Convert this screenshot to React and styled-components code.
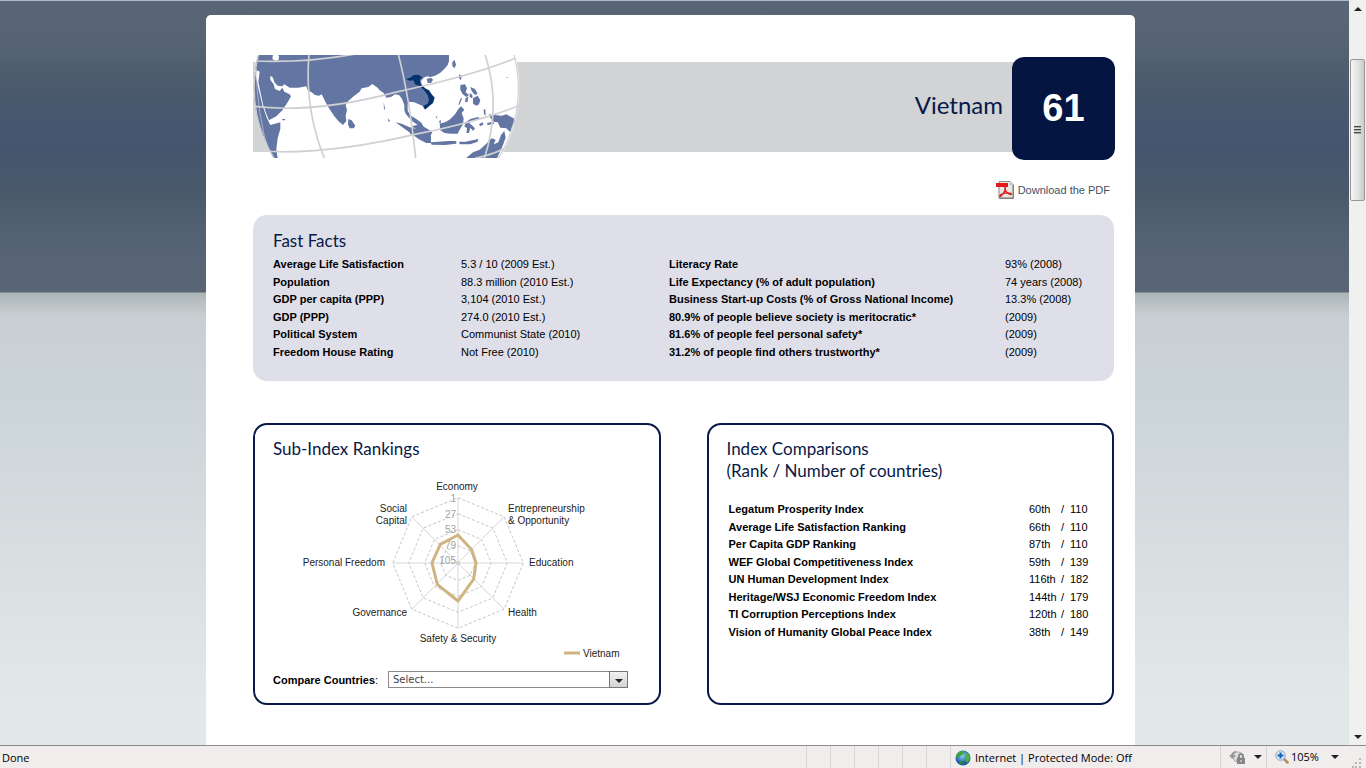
import React from 'react';
import styled, { createGlobalStyle } from 'styled-components';

const navy = '#081848';
const bodyFont = '"Liberation Sans", Arial, sans-serif';
const headingFont = 'Lato, "Gill Sans", sans-serif';
const chromeFont = '"Open Sans", "Segoe UI", sans-serif';

const facts = [
  ['Average Life Satisfaction', '5.3 / 10 (2009 Est.)', 'Literacy Rate', '93% (2008)'],
  ['Population', '88.3 million (2010 Est.)', 'Life Expectancy (% of adult population)', '74 years (2008)'],
  ['GDP per capita (PPP)', '3,104 (2010 Est.)', 'Business Start-up Costs (% of Gross National Income)', '13.3% (2008)'],
  ['GDP (PPP)', '274.0 (2010 Est.)', '80.9% of people believe society is meritocratic*', '(2009)'],
  ['Political System', 'Communist State (2010)', '81.6% of people feel personal safety*', '(2009)'],
  ['Freedom House Rating', 'Not Free (2010)', '31.2% of people find others trustworthy*', '(2009)'],
];

const comparisons = [
  ['Legatum Prosperity Index', '60th', '110'],
  ['Average Life Satisfaction Ranking', '66th', '110'],
  ['Per Capita GDP Ranking', '87th', '110'],
  ['WEF Global Competitiveness Index', '59th', '139'],
  ['UN Human Development Index', '116th', '182'],
  ['Heritage/WSJ Economic Freedom Index', '144th', '179'],
  ['TI Corruption Perceptions Index', '120th', '180'],
  ['Vision of Humanity Global Peace Index', '38th', '149'],
];

const rings = [65.3, 49.3, 33.3, 17.3];
const ticks = [
  { label: '1', y: -61 },
  { label: '27', y: -45 },
  { label: '53', y: -30 },
  { label: '79', y: -14 },
  { label: '105', y: 1 },
];
const axisLabels = [
  { text: 'Economy', x: -1, y: -73, anchor: 'middle' },
  { text: 'Entrepreneurship', x: 50, y: -51, anchor: 'start' },
  { text: '& Opportunity', x: 50, y: -39, anchor: 'start' },
  { text: 'Education', x: 71, y: 3, anchor: 'start' },
  { text: 'Health', x: 50, y: 53, anchor: 'start' },
  { text: 'Safety & Security', x: 0, y: 79, anchor: 'middle' },
  { text: 'Governance', x: -51, y: 53, anchor: 'end' },
  { text: 'Personal Freedom', x: -73, y: 3, anchor: 'end' },
  { text: 'Social', x: -51, y: -51, anchor: 'end' },
  { text: 'Capital', x: -51, y: -39, anchor: 'end' },
];

// Corners of an octagon round the origin, the first one straight up
const octagon = (radius) => Array.from({ length: 8 }, (_, i) => {
  const angle = (i * Math.PI) / 4;
  return [radius * Math.sin(angle), -radius * Math.cos(angle)];
});

function GlobeMap () {
  return (
    <GlobeSvg viewBox="24 30 801 309" aria-hidden="true">
      <defs>
        <clipPath id="globeDisc">
          <circle cx="424" cy="130" r="398" />
        </clipPath>
      </defs>
      <circle cx="424" cy="130" r="399" fill="#fff" />
      <g clipPath="url(#globeDisc)">
        <g fill="#6376a3">
          <path d="M24 28H84L82 42L92 48L101 44L102 34L98 28H612L612 48L608 60L598 72L585 84L570 92L556 96L546 94L536 98L528 108L530 118L540 130L552 138L560 150L562 168L548 182L538 192L532 182L518 176L508 172L494 170L488 178L488 198L498 212L514 222L530 234L536 246L524 244L506 232L492 218L482 206L478 196L478 180L470 160L462 150L450 148L438 156L424 158L416 144L404 136L398 128L382 117L370 126L350 130L344 140L326 154L310 168L302 180L306 196L302 212L304 228L294 240L282 230L268 214L252 190L240 168L230 148L222 152L210 150L200 142L188 136L184 124L160 128L134 128L118 118L112 124L98 122L88 112L84 98L76 92L76 104L86 118L90 132L104 138L112 128L118 140L134 148L138 154L128 172L112 196L94 214L72 226L64 206L54 178L46 140L40 110L44 80L36 76L32 86L24 90Z" />
          <path d="M24 84L32 90L40 130L52 180L66 220L76 240L90 236L106 232L106 252L98 280L94 312L98 340H70L24 250Z" />
          <path d="M310 222L320 226L331 242L326 250L314 250L309 238Z" />
          <path d="M622 52L628 44L633 58L629 70L622 64Z" />
          <path d="M545 102L558 98L564 104L558 114L548 114Z" />
          <path d="M452 232L470 236L492 246L514 252L540 262L558 274L558 294L544 294L524 284L504 270L488 258L468 244Z" />
          <path d="M500 244L524 238L548 252L562 262L556 274L536 266Z" />
          <path d="M584 236L604 230L616 222L630 208L640 192L648 184L658 194L650 204L656 220L654 238L644 254L638 266L616 266L598 264L586 256Z" />
          <path d="M556 292L580 290L610 288L634 288L634 296L600 300L560 299Z" />
          <path d="M642 290L662 290L682 286L700 282L698 290L676 298L644 298Z" />
          <path d="M662 232L676 222L700 216L704 220L684 228L672 234L680 240L690 250L684 258L676 248L672 264L664 264L666 250L658 244Z" />
          <path d="M646 120L660 118L666 130L662 142L672 150L664 156L652 146L646 134Z" />
          <path d="M662 160L670 154L668 170L660 172ZM676 126L690 132L698 146L690 150L680 138ZM684 160L698 152L706 166L702 178L694 182L684 176ZM646 162L652 158L644 178L640 180ZM674 144L682 150L682 160L674 156Z" />
          <path d="M642 88L650 92L648 106L642 100ZM716 194L721 192L722 212L717 208ZM702 238L712 232L716 238L706 244ZM726 234L744 230L748 236L728 240Z" />
          <path d="M732 208L750 210L770 212L784 208L806 220L814 230L802 242L796 262L784 250L766 248L758 232L746 230L736 218Z" />
          <path d="M662 340L684 322L704 314L720 300L740 280L752 284L746 298L760 292L768 270L778 258L782 278L774 300L756 340Z" />
          <path d="M416 172L420 190L417 196ZM428 220L436 228L431 230ZM494 262L502 268L496 268ZM572 214L578 216L574 220ZM112 222H120V226H112ZM785 96H788V99H785ZM582 228L588 226L586 240Z" />
        </g>
        <path d="M482 101L494 99L506 90L520 89L532 97L524 104L526 116L540 130L552 136L560 148L569 158L564 174L552 184L540 194L536 182L548 176L552 164L548 150L536 134L522 122L510 118L506 106L494 107Z" fill="#06326b" />
        <g fill="none" stroke="#cfd0d3" strokeWidth="5">
          <path d="M26 48Q180 54 325 28" />
          <path d="M24 184Q210 206 450 142Q690 90 815 38" />
          <path d="M52 318Q240 332 520 266Q700 230 822 182" />
          <path d="M192 28Q178 190 238 340" />
          <path d="M460 28Q494 160 512 340" />
          <path d="M720 28Q770 180 718 340" />
          <path d="M690 340Q750 328 790 304" />
          <path d="M34 70Q34 200 76 340" strokeWidth="2" />
          <circle cx="424" cy="130" r="397" />
        </g>
      </g>
    </GlobeSvg>
  );
}

function PdfIcon () {
  return (
    <svg width="18" height="18" viewBox="0 0 18 18" aria-hidden="true">
      <path d="M3 .5H14L17.500 4V17.500H3Z" fill="#e9e7e3" stroke="#8f8b86" />
      <path d="M14 .5V4H17.500Z" fill="#c9c6c2" />
      <path d="M17 4V17H4" fill="none" stroke="#767270" />
      <path d="M0 2H12V6H0Z" fill="#e1191d" />
      <path d="M9.500 6C9 10 7 13.500 4.500 15.500C3 16.500 3.500 14 6 13C9 12 12.500 11.500 15 12.500C16.500 13.500 14 14 12 12.500C10 11 9 9 8.500 6.500" fill="none" stroke="#df2226" strokeWidth="1.400" />
    </svg>
  );
}

function RadarChart () {
  return (
    <ChartSvg viewBox="-185 -88 355 186" role="img" aria-label="Sub-index rankings for Vietnam">
      {rings.map((radius) => (
        <polygon
          key={radius}
          points={octagon(radius).join(' ')}
          fill="none"
          stroke="#c6c6c9"
          strokeDasharray="3 2"
        />
      ))}
      {octagon(65.3).map(([x, y]) => (
        <line key={`${x},${y}`} x2={x} y2={y} stroke="#d6d6d8" />
      ))}
      <circle r="2" fill="#d0d0d2" />
      {ticks.map(({ label, y }) => (
        <TickText key={label} x="-2" y={y}>{label}</TickText>
      ))}
      <polygon
        points="0,-28 13.700,-13.300 18,0 15.700,16 0,38 -20.700,21.300 -26,0 -17.700,-18.700"
        fill="none"
        stroke="#cfb482"
        strokeWidth="3"
      />
      {axisLabels.map(({ text, x, y, anchor }) => (
        <AxisText key={text} x={x} y={y} textAnchor={anchor}>{text}</AxisText>
      ))}
      <line x1="106" x2="122" y1="90" y2="90" stroke="#cfb482" strokeWidth="3" />
      <AxisText x="125" y="94">Vietnam</AxisText>
    </ChartSvg>
  );
}

function Caret ({ up }) {
  return (
    <svg width="8" height="4" viewBox="0 0 8 4" aria-hidden="true">
      <path d={up ? 'M0 4L4 0L8 4Z' : 'M0 0H8L4 4Z'} fill="#222" />
    </svg>
  );
}

function InternetIcon () {
  return (
    <svg width="16" height="16" viewBox="0 0 16 16" aria-hidden="true">
      <defs>
        <radialGradient id="ocean" cx="45%" cy="35%">
          <stop offset="0" stopColor="#8fd0f2" />
          <stop offset="1" stopColor="#1c5ba6" />
        </radialGradient>
      </defs>
      <circle cx="8" cy="8" r="7.500" fill="url(#ocean)" />
      <path d="M2 4L5 1.500L8 1L9 3L7 5L5 6L4 8L2 7L1 6Z" fill="#3fa535" />
      <path d="M11 3L13 3.500L15 7L14 11L12 13L10.500 10L11.500 8L10 6Z" fill="#4bb53b" />
      <path d="M4 11L7 11L8 12.500L6 15L4 13.500Z" fill="#2c8b3a" />
    </svg>
  );
}

function PrivacyIcon () {
  return (
    <svg width="17" height="16" viewBox="0 0 17 16" aria-hidden="true">
      <path d="M3 7A6 6 0 0 1 14 6V10L9 8L7 13A6 6 0 0 1 5 11Z" fill="#dedede" stroke="#aaa" />
      <path d="M0 6L3 10L7 7L5 6A5 5 0 0 1 8 2A6 6 0 0 0 2 6Z" fill="#999" />
      <path d="M10 9V7A2 2 0 0 1 14 7V9" fill="none" stroke="#777" strokeWidth="1.500" />
      <path d="M8 9H16V15H8Z" fill="#858585" />
      <path d="M12 11V13" stroke="#eee" />
    </svg>
  );
}

function ZoomIcon () {
  return (
    <svg width="14" height="14" viewBox="0 0 14 14" aria-hidden="true">
      <path d="M8.500 8.500L12.500 12.500" stroke="#b98b63" strokeWidth="2.600" strokeLinecap="round" />
      <circle cx="5.500" cy="5.500" r="4.800" fill="#dcecf9" stroke="#8ca6c4" />
      <path d="M5.500 2.500V8.500M2.500 5.500H8.500" stroke="#1763b8" strokeWidth="2" />
    </svg>
  );
}

function StatusBar () {
  return (
    <Status>
      <StatusText>Done</StatusText>
      {[1, 2, 3, 4, 5, 6].map((n) => <StatusSlot key={n} />)}
      <StatusZone>
        <InternetIcon />
        Internet | Protected Mode: Off
      </StatusZone>
      <StatusButton type="button" $width="46px" aria-label="Privacy report">
        <PrivacyIcon />
        <Caret />
      </StatusButton>
      <StatusButton type="button" $width="100px">
        <ZoomLevel>
          <ZoomIcon />
          105%
        </ZoomLevel>
        <Caret />
        <ResizeGrip width="10" height="10" viewBox="0 0 10 10" aria-hidden="true">
          <path d="M7 0h2v2h-2zM3 4h2v2h-2zM7 4h2v2h-2zM0 8h2v2h-2zM3 8h2v2h-2zM7 8h2v2h-2z" fill="#b9b5b5" />
        </ResizeGrip>
      </StatusButton>
    </Status>
  );
}

export default function App () {
  return (
    <>
      <GlobalStyle />
      <Window>
        <Viewport>
          <Page>
            <Sheet>
              <Banner>
                <GlobeMap />
                <CountryName>Vietnam</CountryName>
                <RankBadge>61</RankBadge>
              </Banner>
              <PdfLink href="#pdf">
                <PdfIcon />
                Download the PDF
              </PdfLink>
              <FactsCard>
                <CardHeading>Fast Facts</CardHeading>
                <FactsTable>
                  <colgroup>
                    <col width="188" />
                    <col width="208" />
                    <col width="336" />
                    <col />
                  </colgroup>
                  <tbody>
                    {facts.map(([label, value, otherLabel, otherValue]) => (
                      <tr key={label}>
                        <th scope="row">{label}</th>
                        <td>{value}</td>
                        <th scope="row">{otherLabel}</th>
                        <td>{otherValue}</td>
                      </tr>
                    ))}
                  </tbody>
                </FactsTable>
              </FactsCard>
              <CardRow>
                <OutlineCard>
                  <CardHeading>Sub-Index Rankings</CardHeading>
                  <RadarChart />
                  <CompareRow>
                    <CompareLabel htmlFor="compare"><b>Compare Countries</b>:</CompareLabel>
                    <SelectBox>
                      <CountrySelect id="compare" defaultValue="">
                        <option value="">Select...</option>
                      </CountrySelect>
                      <SelectArrow><Caret /></SelectArrow>
                    </SelectBox>
                  </CompareRow>
                </OutlineCard>
                <OutlineCard>
                  <CardHeading>
                    Index Comparisons
                    <br />
                    (Rank / Number of countries)
                  </CardHeading>
                  <RankTable>
                    <colgroup>
                      <col />
                      <col width="32" />
                      <col width="9" />
                      <col width="26" />
                    </colgroup>
                    <tbody>
                      {comparisons.map(([label, rank, total]) => (
                        <tr key={label}>
                          <th scope="row">{label}</th>
                          <td>{rank}</td>
                          <td>/</td>
                          <td>{total}</td>
                        </tr>
                      ))}
                    </tbody>
                  </RankTable>
                </OutlineCard>
              </CardRow>
            </Sheet>
          </Page>
          <ScrollTrack>
            <ScrollButton type="button" aria-label="Scroll up"><Caret up /></ScrollButton>
            <ScrollThumb>
              <svg width="7" height="8" viewBox="0 0 7 8" aria-hidden="true">
                <path d="M0 .5H7M0 3.500H7M0 6.500H7" stroke="#444" />
                <path d="M0 1.500H7M0 4.500H7M0 7.500H7" stroke="#aaa" />
              </svg>
            </ScrollThumb>
            <ScrollButton type="button" aria-label="Scroll down"><Caret /></ScrollButton>
          </ScrollTrack>
        </Viewport>
        <StatusBar />
      </Window>
    </>
  );
}

const GlobalStyle = createGlobalStyle`
  * {
    box-sizing: border-box;
  }
  body {
    margin: 0;
    font-family: ${bodyFont};
    font-size: 11px;
    color: #000;
  }
  svg {
    display: block;
    flex: none;
  }
`;

const Window = styled.div`
  display: flex;
  flex-direction: column;
  height: 100vh;
`;

const Viewport = styled.div`
  display: flex;
  flex: 1;
  min-height: 0;
`;

const Page = styled.main`
  flex: 1;
  overflow: hidden;
  display: flex;
  justify-content: center;
  padding: 15px 8px 0 0;
  background: linear-gradient(
    #a9bcc5 0,
    #a9bcc5 1px,
    #5a6577 1px,
    #586474 36px,
    #4f5e6e 68px,
    #49596c 98px,
    #47576f 120px,
    #45556d 148px,
    #47586e 172px,
    #4a5a6a 196px,
    #526071 230px,
    #586475 256px,
    #596575 292px,
    #aab4b6 293px,
    #bac2c4 304px,
    #c8cfd2 316px,
    #cad3d6 380px,
    #e2e8ea 700px
  );
`;

const Sheet = styled.div`
  width: 100%;
  max-width: 929px;
  padding: 40px 20px 0 47px;
  border-radius: 5px 5px 0 0;
  background: #fff;
`;

const Banner = styled.header`
  display: flex;
  align-items: flex-start;
  background: linear-gradient(#d1d3d4, #d1d3d4) no-repeat 0 7px / calc(100% - 50px) 90px;
`;

const GlobeSvg = styled.svg`
  width: 267px;
  height: 103px;
`;

const CountryName = styled.h1`
  margin: 35px 9px 0 auto;
  font: 24px/30px ${headingFont};
  color: ${navy};
`;

const RankBadge = styled.div`
  width: 103px;
  margin-top: 2px;
  border-radius: 12px;
  background: #041542;
  color: #fff;
  font-size: 38px;
  font-weight: bold;
  line-height: 103px;
  text-align: center;
`;

const PdfLink = styled.a`
  display: flex;
  align-items: center;
  gap: 4px;
  width: fit-content;
  margin: 21px 5px 0 auto;
  color: #43506a;
  text-decoration: none;
`;

const FactsCard = styled.section`
  margin: 16px 1px 0 0;
  padding: 15px 20px 20px;
  border-radius: 14px;
  background: #dfdfe9;
`;

const CardHeading = styled.h2`
  margin: 0;
  font: 17px/22px ${headingFont};
  color: ${navy};
`;

const DataTable = styled.table`
  width: 100%;
  table-layout: fixed;
  border-collapse: collapse;
  text-align: left;
  th, td {
    padding: 0;
    line-height: 13px;
    white-space: nowrap;
  }
`;

const FactsTable = styled(DataTable)`
  height: 105px;
  margin-top: 4px;
`;

const CardRow = styled.div`
  display: flex;
  gap: 46px;
  margin: 42px 1px 0 0;
`;

const OutlineCard = styled.section`
  flex: 1;
  min-height: 282px;
  padding: 13px 18px;
  border: 2px solid ${navy};
  border-radius: 14px;
`;

const RankTable = styled(DataTable)`
  height: 140px;
  margin: 19px 0 0 2px;
`;

const ChartSvg = styled.svg`
  width: 355px;
  height: 186px;
  margin-top: 15px;
`;

const AxisText = styled.text`
  font-size: 10px;
  fill: #222;
`;

const TickText = styled.text`
  font-size: 10px;
  text-anchor: end;
  fill: #a3a3a3;
`;

const CompareRow = styled.div`
  display: flex;
  align-items: center;
  gap: 3px;
  margin-top: 10px;
`;

const CompareLabel = styled.label`
  width: 112px;
`;

const SelectBox = styled.div`
  position: relative;
  width: 240px;
`;

const CountrySelect = styled.select`
  display: block;
  width: 100%;
  height: 17px;
  padding: 0 20px 0 4px;
  border: 1px solid #8a8a8a;
  border-radius: 0;
  background: #fff;
  color: #444;
  font: 10px "DejaVu Sans", sans-serif;
  appearance: none;
`;

const SelectArrow = styled.span`
  position: absolute;
  top: 0;
  right: 0;
  display: flex;
  align-items: center;
  justify-content: center;
  width: 19px;
  height: 17px;
  padding-top: 3px;
  border: 1px solid #777;
  background: linear-gradient(#f2f2f2, #d4d4d4);
  pointer-events: none;
`;

const ScrollTrack = styled.div`
  display: flex;
  flex-direction: column;
  width: 17px;
  padding: 0 1px;
  background: #f0f0f0;
`;

const ScrollButton = styled.button`
  display: flex;
  align-items: center;
  justify-content: center;
  height: 17px;
  padding: 0;
  border: 0;
  background: none;
`;

const ScrollThumb = styled.div`
  display: flex;
  align-items: center;
  justify-content: center;
  height: 142px;
  margin: 42px 0 auto;
  border: 1px solid #979797;
  border-radius: 2px;
  background: linear-gradient(90deg, #f6f6f6, #e4e4e5 50%, #c9cacd);
`;

const Status = styled.footer`
  display: flex;
  height: 23px;
  border-top: 1px solid #8b8b8b;
  background: #f0edec;
  font: 11px/22px ${chromeFont};
`;

const StatusText = styled.span`
  flex: 1;
  padding: 1px 2px;
`;

const StatusSlot = styled.span`
  width: 24px;
  border-left: 1px solid #d7d4d4;
`;

const StatusZone = styled.span`
  display: flex;
  align-items: center;
  gap: 4px;
  width: 270px;
  padding: 1px 0 0 4px;
  border-left: 1px solid #d7d4d4;
  white-space: nowrap;
`;

const StatusButton = styled.button`
  display: flex;
  align-items: center;
  justify-content: space-between;
  width: ${({ $width }) => $width};
  padding: 0 4px 0 8px;
  border: 0;
  border-left: 1px solid #d7d4d4;
  background: none;
  color: #000;
  font: inherit;
`;

const ZoomLevel = styled.span`
  display: flex;
  align-items: center;
  gap: 2px;
`;

const ResizeGrip = styled.svg`
  align-self: flex-end;
`;
